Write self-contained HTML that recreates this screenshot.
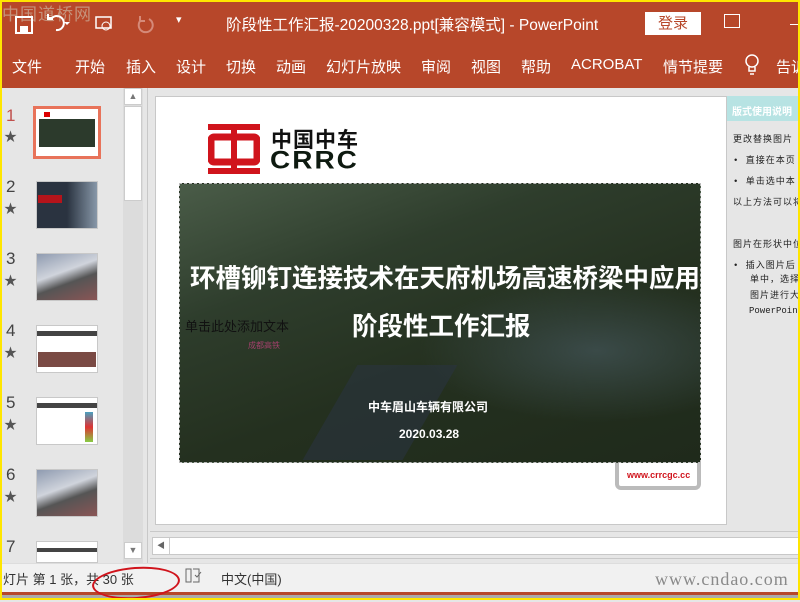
<!DOCTYPE html>
<html><head><meta charset="utf-8"><style>
*{margin:0;padding:0;box-sizing:border-box}
body{width:800px;height:600px;overflow:hidden;position:relative;background:#e6e6e6;font-family:"Liberation Sans","Noto Sans CJK SC",sans-serif}
.a{position:absolute}
.t{color:#fff;font-size:15px;white-space:nowrap}
.thumb{position:absolute;left:36px;width:62px;height:48px;border:1px solid #c8c8c8;background:#777}
.num{position:absolute;left:6px;font-size:17px;color:#444}
.star{position:absolute;left:4px;font-size:13px;color:#555}
.n{font-size:9px;color:#222;position:absolute;left:733px;white-space:nowrap;font-family:"Liberation Mono","Noto Sans CJK SC",monospace;letter-spacing:1px}
</style></head><body>
<div class="a" style="left:0;top:0;width:800px;height:600px;border:2px solid #ffe600;z-index:10;pointer-events:none"></div>
<div class="a" style="left:0;top:0;width:800px;height:88px;background:#b7472a"></div>
<div class="a" style="left:2px;top:0;font-size:17px;color:#c9a590;letter-spacing:1px;opacity:.8">中国道桥网</div>
<svg class="a" style="left:14px;top:14px" width="120" height="22"><rect x="2" y="3" width="16" height="16" fill="none" stroke="#fff" stroke-width="2"/><rect x="6" y="12" width="8" height="7" fill="#fff"/><path d="M42 16a7 7 0 1 0 -4-12l-4 0M34 0v5h5" fill="none" stroke="#fff" stroke-width="2"/><path d="M50 8l3 3 3-3" fill="#fff"/><rect x="82" y="3" width="15" height="11" fill="none" stroke="#fff" stroke-width="1.5"/><circle cx="92" cy="12" r="4" fill="none" stroke="#fff"/></svg>
<svg class="a" style="left:135px;top:13px" width="20" height="22"><path d="M14 6a7 7 0 1 1 -8 1M5 3v5h5" fill="none" stroke="#d58a79" stroke-width="2"/></svg>
<div class="a t" style="left:176px;top:13px;font-size:11px">▾</div>
<div class="a t" style="left:226px;top:13px;font-size:15.5px">阶段性工作汇报-20200328.ppt[兼容模式]  -  PowerPoint</div>
<div class="a" style="left:645px;top:12px;width:56px;height:23px;background:#fff;color:#b7472a;font-size:15px;text-align:center;line-height:23px">登录</div>
<div class="a" style="left:724px;top:14px;width:16px;height:14px;border:1.5px solid #fff"></div>
<div class="a" style="left:790px;top:24px;width:10px;height:1px;background:#fff"></div>
<div class="a t" style="left:12px;top:56px">文件</div>
<div class="a t" style="left:75px;top:56px">开始</div>
<div class="a t" style="left:126px;top:56px">插入</div>
<div class="a t" style="left:176px;top:56px">设计</div>
<div class="a t" style="left:226px;top:56px">切换</div>
<div class="a t" style="left:276px;top:56px">动画</div>
<div class="a t" style="left:326px;top:56px">幻灯片放映</div>
<div class="a t" style="left:421px;top:56px">审阅</div>
<div class="a t" style="left:471px;top:56px">视图</div>
<div class="a t" style="left:521px;top:56px">帮助</div>
<div class="a t" style="left:571px;top:56px">ACROBAT</div>
<div class="a t" style="left:663px;top:56px">情节提要</div>
<svg class="a" style="left:744px;top:54px" width="16" height="22"><circle cx="8" cy="7" r="6" fill="none" stroke="#fff" stroke-width="1.5"/><path d="M5 13v4h6v-4M6 20h4" stroke="#fff" fill="none" stroke-width="1.5"/></svg>
<div class="a t" style="left:776px;top:56px">告诉</div>
<!-- left pane -->
<div class="a" style="left:0;top:88px;width:145px;height:476px;background:#e6e6e6"></div>
<div class="a" style="left:123px;top:88px;width:20px;height:476px;background:#dcdcdc"></div>
<div class="a" style="left:124px;top:88px;width:18px;height:17px;background:#fff;border:1px solid #ccc;font-size:9px;color:#777;text-align:center;line-height:15px">▲</div>
<div class="a" style="left:124px;top:106px;width:18px;height:95px;background:#fff;border:1px solid #ccc"></div>
<div class="a" style="left:124px;top:542px;width:18px;height:17px;background:#fff;border:1px solid #ccc;font-size:9px;color:#777;text-align:center;line-height:15px">▼</div>
<div class="a" style="left:147px;top:88px;width:1px;height:476px;background:#c8c8c8"></div>
<div class="num" style="top:106px;color:#c0504d">1</div><div class="star" style="top:126px">★</div>
<div class="a" style="left:33px;top:106px;width:68px;height:53px;border:3px solid #e8735a;background:#fff"><div style="position:absolute;left:3px;top:10px;width:56px;height:28px;background:#2c3a2c"></div><div style="position:absolute;left:8px;top:3px;width:6px;height:5px;background:#d00"></div></div>
<div class="num" style="top:177px">2</div><div class="star" style="top:198px">★</div>
<div class="thumb" style="top:181px;background:linear-gradient(90deg,#2a3340 50%,#8797a8)"><div style="position:absolute;left:1px;top:13px;width:24px;height:8px;background:#b5141b"></div></div>
<div class="num" style="top:249px">3</div><div class="star" style="top:270px">★</div>
<div class="thumb" style="top:253px;background:linear-gradient(160deg,#8f9bb0,#d0d4dc 40%,#555 60%,#8a5555)"></div>
<div class="num" style="top:321px">4</div><div class="star" style="top:342px">★</div>
<div class="thumb" style="top:325px;background:#fff"><div style="position:absolute;left:0;top:5px;width:60px;height:5px;background:#444"></div><div style="position:absolute;left:1px;top:26px;width:58px;height:15px;background:#7a4a44"></div></div>
<div class="num" style="top:393px">5</div><div class="star" style="top:414px">★</div>
<div class="thumb" style="top:397px;background:#fff"><div style="position:absolute;left:0;top:5px;width:60px;height:5px;background:#444"></div><div style="position:absolute;left:48px;top:14px;width:8px;height:30px;background:linear-gradient(#4aa0c0,#d33,#8c4)"></div></div>
<div class="num" style="top:465px">6</div><div class="star" style="top:486px">★</div>
<div class="thumb" style="top:469px;background:linear-gradient(160deg,#8f9bb0,#d0d4dc 40%,#555 60%,#8a5555)"></div>
<div class="num" style="top:537px">7</div>
<div class="thumb" style="top:541px;height:22px;background:#fff"><div style="position:absolute;left:0;top:6px;width:60px;height:4px;background:#444"></div></div>
<!-- slide -->
<div class="a" style="left:155px;top:96px;width:572px;height:429px;background:#fff;border:1px solid #c8c8c8"></div>
<svg class="a" style="left:208px;top:124px" width="52" height="50"><rect x="0" y="0" width="52" height="6" fill="#d0141c"/><rect x="0" y="44" width="52" height="6" fill="#d0141c"/><rect x="23" y="0" width="6" height="50" fill="#d0141c"/><rect x="3" y="13" width="46" height="25" rx="3" fill="none" stroke="#d0141c" stroke-width="7"/></svg>
<div class="a" style="left:271px;top:124px;font-size:21px;font-weight:bold;color:#111;letter-spacing:1px">中国中车</div>
<div class="a" style="left:270px;top:146px;font-size:28px;font-weight:bold;color:#0e1a10;letter-spacing:2px;transform:scaleY(0.9);transform-origin:top left">CRRC</div>
<div class="a" style="left:179px;top:183px;width:522px;height:280px;border:1px dashed #bbb;background:radial-gradient(ellipse at 80% 60%,#3a4a48 0,transparent 30%),linear-gradient(160deg,#4a5c48 0%,#2e3d2c 30%,#24301f 60%,#1f2a1b 100%)"></div>
<div class="a" style="left:330px;top:365px;width:100px;height:95px;background:#2a3340;opacity:.6;transform:skewX(-30deg)"></div>
<div class="a" style="left:190px;top:258px;font-size:25.5px;font-weight:bold;color:#fff;white-space:nowrap">环槽铆钉连接技术在天府机场高速桥梁中应用</div>
<div class="a" style="left:352px;top:306px;font-size:25.5px;font-weight:bold;color:#fff">阶段性工作汇报</div>
<div class="a" style="left:185px;top:316px;font-size:13px;color:#111">单击此处添加文本</div>
<div class="a" style="left:248px;top:340px;font-size:8px;color:#a0406a">成都高铁</div>
<div class="a" style="left:368px;top:398px;font-size:12px;font-weight:bold;color:#fff">中车眉山车辆有限公司</div>
<div class="a" style="left:399px;top:427px;font-size:12px;font-weight:bold;color:#fff">2020.03.28</div>
<div class="a" style="left:615px;top:463px;width:86px;height:27px;border:4px solid #bbb;border-top:none;border-radius:0 0 6px 6px;background:#fff"></div>
<div class="a" style="left:627px;top:470px;font-size:9px;font-weight:bold;color:#d0141c">www.crrcgc.cc</div>
<!-- notes pane -->
<div class="a" style="left:727px;top:96px;width:73px;height:25px;background:#b7e3e3"></div>
<div class="a" style="left:732px;top:103px;font-size:10px;font-weight:bold;color:#fff;white-space:nowrap">版式使用说明</div>
<div class="n" style="top:132px">更改替换图片</div>
<div class="n" style="top:153px">•  直接在本页</div>
<div class="n" style="top:174px">•  单击选中本</div>
<div class="n" style="top:195px">以上方法可以将</div>
<div class="n" style="top:237px">图片在形状中位</div>
<div class="n" style="top:258px">•  插入图片后</div>
<div class="n" style="top:272px;left:750px">单中，选择</div>
<div class="n" style="top:288px;left:750px">图片进行大</div>
<div class="n" style="top:306px;left:749px;letter-spacing:0">PowerPoint</div>
<!-- hscroll -->
<div class="a" style="left:150px;top:531px;width:650px;height:1px;background:#c8c8c8"></div>
<div class="a" style="left:152px;top:537px;width:648px;height:18px;background:#fff;border:1px solid #c8c8c8"></div>
<div class="a" style="left:153px;top:538px;width:17px;height:16px;border-right:1px solid #ccc;font-size:8px;color:#666;text-align:center;line-height:16px">◀</div>
<div class="a" style="left:150px;top:558px;width:650px;height:1px;background:#c8c8c8"></div>
<!-- status -->
<div class="a" style="left:0;top:563px;width:800px;height:29px;background:#f1f1f1;border-top:1px solid #ddd"></div>
<div class="a" style="left:0;top:592px;width:800px;height:3px;background:#b7472a"></div>
<div class="a" style="left:0;top:595px;width:800px;height:5px;background:#aaa"></div>
<div class="a" style="left:3px;top:569px;font-size:13px;color:#333;white-space:nowrap">灯片 第 1 张，共 30 张</div>
<div class="a" style="left:92px;top:567px;width:88px;height:32px;border:2.5px solid #d0141c;border-radius:50%;transform:rotate(-4deg)"></div>
<svg class="a" style="left:185px;top:568px" width="18" height="16"><path d="M1 1h5v13h-5zM8 1h6v13H8" fill="none" stroke="#666"/><path d="M10 7l2 2 4-5" stroke="#666" fill="none"/></svg>
<div class="a" style="left:221px;top:569px;font-size:13px;color:#333">中文(中国)</div>
<div class="a" style="left:655px;top:569px;font-size:18px;color:#8a8a8a;font-family:'Liberation Serif',serif;letter-spacing:1px">www.cndao.com</div>
</body></html>
